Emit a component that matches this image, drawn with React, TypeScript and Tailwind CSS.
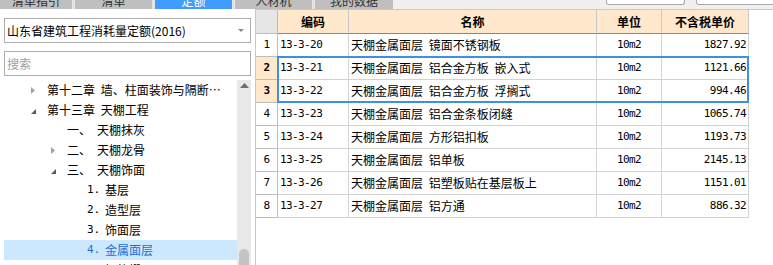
import React from 'react'

const CJK = "font-['Noto_Sans_CJK_SC',sans-serif]"
const MONO = "font-['DejaVu_Sans_Mono','Noto_Sans_CJK_SC',monospace] text-[11px] tracking-[-0.6px]"

const TABS = [
  { label: '清单指引', w: 'w-[72px]', active: false },
  { label: '清单', w: 'w-[77px]', active: false },
  { label: '定额', w: 'w-[77px]', active: true },
  { label: '人材机', w: 'w-[77px]', active: false },
  { label: '我的数据', w: 'w-[78px]', active: false },
]

type TreeNode = {
  level: number
  icon?: 'open' | 'closed'
  prefix?: string
  label: string
  selected?: boolean
}

const TREE: TreeNode[] = [
  { level: 0, icon: 'closed', label: '第十二章 墙、柱面装饰与隔断…' },
  { level: 0, icon: 'open', label: '第十三章 天棚工程' },
  { level: 1, prefix: '一、', label: '天棚抹灰' },
  { level: 1, icon: 'closed', prefix: '二、', label: '天棚龙骨' },
  { level: 1, icon: 'open', prefix: '三、', label: '天棚饰面' },
  { level: 2, prefix: '1.', label: '基层' },
  { level: 2, prefix: '2.', label: '造型层' },
  { level: 2, prefix: '3.', label: '饰面层' },
  { level: 2, prefix: '4.', label: '金属面层', selected: true },
  { level: 2, prefix: '5.', label: '铝格栅层' },
]

const INDENT = ['pl-[21px]', 'pl-[41px]', 'pl-[61px]']

const ROWS = [
  { n: 1, code: '13-3-20', name: '天棚金属面层 镜面不锈钢板', unit: '10m2', price: '1827.92' },
  { n: 2, code: '13-3-21', name: '天棚金属面层 铝合金方板 嵌入式', unit: '10m2', price: '1121.66' },
  { n: 3, code: '13-3-22', name: '天棚金属面层 铝合金方板 浮搁式', unit: '10m2', price: '994.46' },
  { n: 4, code: '13-3-23', name: '天棚金属面层 铝合金条板闭缝', unit: '10m2', price: '1065.74' },
  { n: 5, code: '13-3-24', name: '天棚金属面层 方形铝扣板', unit: '10m2', price: '1193.73' },
  { n: 6, code: '13-3-25', name: '天棚金属面层 铝单板', unit: '10m2', price: '2145.13' },
  { n: 7, code: '13-3-26', name: '天棚金属面层 铝塑板贴在基层板上', unit: '10m2', price: '1151.01' },
  { n: 8, code: '13-3-27', name: '天棚金属面层 铝方通', unit: '10m2', price: '886.32' },
]

const SELECTED_ROWS = [2, 3]

function Caret({ kind }: { kind: 'open' | 'closed' }) {
  if (kind === 'closed') {
    return (
      <svg width="4" height="7" viewBox="0 0 4 7">
        <polygon points="0,0 4,3.5 0,7" fill="#a3a3a3" />
      </svg>
    )
  }
  return (
    <svg width="5" height="5" viewBox="0 0 5 5" className="mt-[2px]">
      <polygon points="5,0 5,5 0,5" fill="#5a5a5a" />
    </svg>
  )
}

function TopBar() {
  return (
    <div className="h-[9px] flex bg-[#f0f0f0] overflow-hidden">
      <div className="flex gap-[3px] bg-[#e4e4e4]">
        {TABS.map((t) => (
          <div
            key={t.label}
            className={`${t.w} h-[9px] flex items-end justify-center overflow-hidden ${
              t.active ? 'bg-[#409cff] text-white' : 'bg-[#bfbfbf] text-[#303030]'
            }`}
          >
            <span className={`${CJK} text-[12px] leading-[12px] mb-[2px] whitespace-nowrap`}>{t.label}</span>
          </div>
        ))}
      </div>
      <div className="ml-[213px] w-[79px] h-[5px] bg-white border border-t-0 border-[#a9a9a9] rounded-b-[3px] shrink-0" />
      <div className="ml-[11px] w-[90px] h-[5px] bg-white border border-t-0 border-[#a9a9a9] rounded-b-[3px] shrink-0" />
    </div>
  )
}

function LeftPanel() {
  return (
    <div className={`w-[255px] shrink-0 bg-white flex flex-col pt-[9px] ${CJK}`}>
      <div className="mx-[4px] h-[25px] border border-[#adadad] flex items-center pl-[2px] pr-[6px]">
        <span className="flex-1 text-[12px] text-black whitespace-nowrap">山东省建筑工程消耗量定额(2016)</span>
        <svg width="6" height="3" viewBox="0 0 6 3">
          <polygon points="0,0 6,0 3,3" fill="#8a8a8a" />
        </svg>
      </div>
      <div className="mx-[4px] mt-[8px] h-[25px] border border-[#adadad] flex items-center pl-[2px]">
        <span className="text-[12px] text-[#a0a0a0]">搜索</span>
      </div>
      <div className="mx-[4px] mt-[4px] flex flex-1 min-h-0">
        <div className="flex-1 flex flex-col">
          {TREE.map((n) => (
            <div
              key={n.label}
              className={`h-[20px] shrink-0 flex items-center ${INDENT[n.level]} ${
                n.selected ? 'bg-[#cce8ff] text-[#1f6fd6]' : 'text-black'
              }`}
            >
              <span className="w-[16px] h-full flex items-center justify-center">
                {n.icon && <Caret kind={n.icon} />}
              </span>
              <span className="ml-[6px] flex items-center text-[12px] whitespace-nowrap [word-spacing:3px]">
                {n.prefix && n.level === 1 && <span className="w-[30px]">{n.prefix}</span>}
                {n.prefix && n.level === 2 && (
                  <span className="w-[18px] font-['DejaVu_Sans_Mono',monospace] text-[11px]">{n.prefix}</span>
                )}
                {n.label}
              </span>
            </div>
          ))}
        </div>
        <div className="w-[14px] bg-[#e8e8e8] flex flex-col items-center justify-between">
          <svg width="9" height="5" viewBox="0 0 9 5" className="mt-[3px]">
            <polygon points="0,5 4.5,0 9,5" fill="#6e6e6e" />
          </svg>
          <div className="w-[10px] h-[16px] bg-[#c4c4c4] rounded-t-[5px]" />
        </div>
      </div>
    </div>
  )
}

function Grid() {
  return (
    <div className="relative w-[493px]">
      <div className="grid grid-cols-[22px_71px_248px_65px_87px]">
        <div className="h-[24px] bg-[#e6e6e6] border-r border-b border-[#bdbdbd]" />
        {['编码', '名称', '单位', '不含税单价'].map((h) => (
          <div
            key={h}
            className={`h-[24px] bg-[#ffe8cb] border-r border-[#c9c9c9] border-b border-b-[#4a94e6] flex items-center justify-center ${CJK} font-bold text-[12px] text-black`}
          >
            {h}
          </div>
        ))}
        {ROWS.map((r) => {
          const sel = SELECTED_ROWS.includes(r.n)
          return (
            <React.Fragment key={r.n}>
              <div
                className={`h-[23px] border-r border-b border-[#bdbdbd] flex items-center justify-center ${MONO} text-black ${
                  sel ? 'bg-[#ffe8cb] font-bold' : 'bg-white'
                }`}
              >
                {r.n}
              </div>
              <div className={`h-[23px] border-r border-b border-[#d3d3d3] flex items-center pl-[2px] ${MONO} text-black`}>
                {r.code}
              </div>
              <div
                className={`h-[23px] border-r border-b border-[#d3d3d3] flex items-center pl-[2px] ${CJK} text-[12px] text-black whitespace-nowrap [word-spacing:3px]`}
              >
                {r.name}
              </div>
              <div className={`h-[23px] border-r border-b border-[#d3d3d3] flex items-center justify-center ${MONO} text-black`}>
                {r.unit}
              </div>
              <div className={`h-[23px] border-r border-b border-[#d3d3d3] flex items-center justify-end pr-[2px] ${MONO} text-black`}>
                {r.price}
              </div>
            </React.Fragment>
          )
        })}
      </div>
      {/* selection outline over rows 2-3 */}
      <div className="absolute top-[46px] left-[21px] w-[472px] h-[47px] border-2 border-[#3f8fe8] pointer-events-none" />
    </div>
  )
}

export default function App() {
  return (
    <div className="w-[773px] h-[265px] overflow-hidden bg-white flex flex-col">
      <TopBar />
      <div className="flex flex-1 min-h-0">
        <LeftPanel />
        <div className="flex-1 border-l border-t border-[#c8c8c8] bg-white">
          <Grid />
        </div>
      </div>
    </div>
  )
}
